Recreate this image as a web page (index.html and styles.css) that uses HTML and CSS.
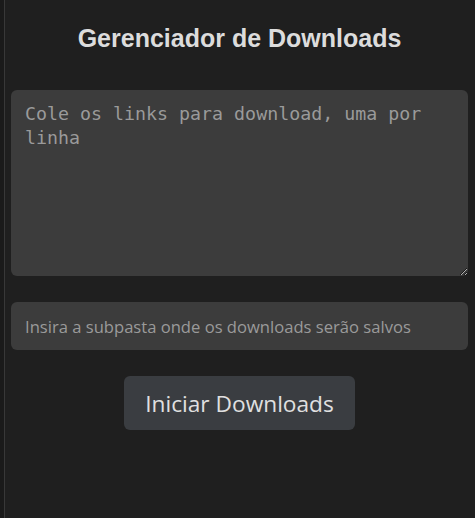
FILE: index.html
```html
<!DOCTYPE html>
<html lang="pt">
<head>
<meta charset="utf-8">
<title>Gerenciador de Downloads</title>
<link rel="stylesheet" href="styles.css">
</head>
<body>
<div class="frame">
  <main class="app">
    <h1 class="title">Gerenciador de Downloads</h1>
    <textarea class="links" placeholder="Cole os links para download, uma por linha"></textarea>
    <input class="folder" type="text" placeholder="Insira a subpasta onde os downloads serão salvos">
    <button class="start" type="button">Iniciar Downloads</button>
  </main>
</div>
</body>
</html>
```
FILE: styles.css
```css
html, body {
  margin: 0;
  padding: 0;
  height: 100%;
  background: #1a1a1a;
}
.frame {
  margin-left: 4px;
  border-left: 1px solid #383838;
  background: #1f1f1f;
  min-height: 100%;
  box-sizing: border-box;
}
.app {
  display: flex;
  flex-direction: column;
  align-items: center;
  padding: 0 7px 0 6px;
}
.title {
  margin: 24px 0 0;
  font-family: "Liberation Sans", Arial, sans-serif;
  font-weight: bold;
  font-size: 25px;
  line-height: 29px;
  color: #dcdcdc;
}
.links {
  margin-top: 37px;
  width: 100%;
  height: 186px;
  box-sizing: border-box;
  background: #3c3c3c;
  border: none;
  border-radius: 6px;
  padding: 12px 14px;
  font-family: "DejaVu Sans Mono", "Liberation Mono", monospace;
  font-size: 18.3px;
  line-height: 24px;
  color: #cccccc;
  resize: vertical;
  outline: none;
}
.links::placeholder { color: #9a9a9a; }
.folder {
  margin-top: 26px;
  width: 100%;
  height: 48px;
  box-sizing: border-box;
  background: #3c3c3c;
  border: none;
  border-radius: 6px;
  padding: 0 14px;
  font-family: "Open Sans", "Noto Sans", sans-serif;
  font-size: 16.6px;
  color: #cccccc;
  outline: none;
}
.folder::placeholder { color: #9a9a9a; }
.start {
  margin-top: 26px;
  height: 54px;
  padding: 0 21px;
  background: #3a3d41;
  border: none;
  border-radius: 6px;
  font-family: "Open Sans", "Noto Sans", sans-serif;
  font-size: 22.7px;
  color: #e0e0e0;
}
```
